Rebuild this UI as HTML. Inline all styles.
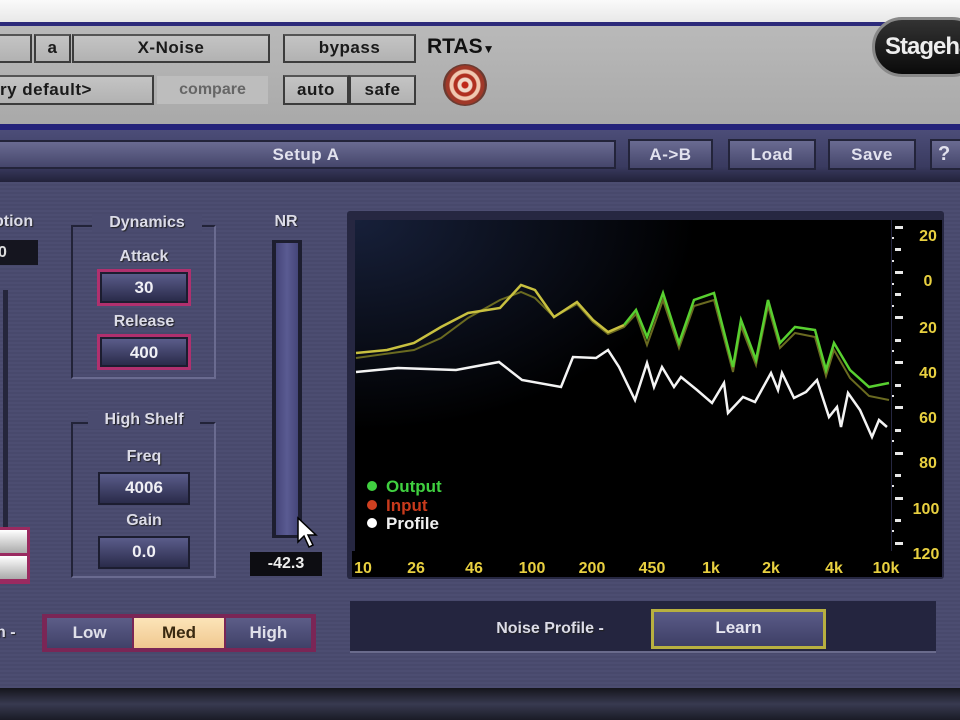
<!DOCTYPE html>
<html><head><meta charset="utf-8"><style>
*{margin:0;padding:0;box-sizing:border-box}
body{width:960px;height:720px;overflow:hidden;background:#4b4c6e;font-family:"Liberation Sans",sans-serif;position:relative}
.a{position:absolute}
.gb{position:absolute;background:linear-gradient(#c4c4c4,#b2b2b2);border:2px solid #3c3c3c;border-top-color:#555;color:#1a1a1a;font-weight:bold;font-size:17px;text-align:center;letter-spacing:0.5px}
.bb{position:absolute;background:linear-gradient(#6a6b92,#45466b);border:2px solid #23243a;color:#e2e2ee;font-weight:bold;font-size:17px;text-align:center;letter-spacing:0.5px}
.lbl{position:absolute;color:#dcdce8;font-weight:bold;font-size:16px;text-align:center;text-shadow:1px 1px 1px #222}
.fld{position:absolute;background:linear-gradient(#5a5c8a,#2a2b4a);border:2px solid #1c1d30;color:#f0f0f5;font-weight:bold;font-size:17px;text-align:center;line-height:28px}
.pink{outline:3px solid #b0306e}
.grp{position:absolute;border:2px solid #222338;border-right-color:#6a6b90;border-bottom-color:#6a6b90}
</style></head><body>
<div class="a" style="left:0;top:0;width:960px;height:22px;background:linear-gradient(#fafafa,#e8e8e8)"></div>
<div class="a" style="left:0;top:22px;width:960px;height:4px;background:#2c2a7a"></div>
<div class="a" style="left:0;top:26px;width:960px;height:99px;background:linear-gradient(#b9b9b9,#a9a9a9)"></div>
<div class="a" style="left:0;top:124px;width:960px;height:6px;background:#25237a"></div>
<div class="a" style="left:0;top:130px;width:960px;height:52px;background:linear-gradient(#4c4d78,#3a3b60 70%,#22223a)"></div>

<div class="gb" style="left:-4px;top:34px;width:36px;height:29px"></div>
<div class="gb" style="left:34px;top:34px;width:37px;height:29px;line-height:24px">a</div>
<div class="gb" style="left:72px;top:34px;width:198px;height:29px;line-height:24px">X-Noise</div>
<div class="gb" style="left:283px;top:34px;width:133px;height:29px;line-height:24px">bypass</div>
<div class="gb" style="left:-4px;top:75px;width:158px;height:30px;line-height:26px;text-align:left;padding-left:2px">ry default&gt;</div>
<div class="a" style="left:157px;top:76px;width:111px;height:28px;background:#bdbdbd;color:#666;font-weight:bold;font-size:16px;text-align:center;line-height:28px">compare</div>
<div class="gb" style="left:283px;top:75px;width:66px;height:30px;line-height:26px">auto</div>
<div class="gb" style="left:349px;top:75px;width:67px;height:30px;line-height:26px">safe</div>
<div class="a" style="left:427px;top:35px;font-weight:bold;font-size:21px;color:#111">RTAS<span style="font-size:12px">▼</span></div>
<div class="a" style="left:443px;top:64px;width:44px;height:42px;border-radius:50%;background:radial-gradient(circle,#c02818 0 3px,#f0d8c8 4px 7px,#b03020 8px 11px,#f0c8b0 12px 15px,#a03828 16px 19px,#6a3a30 20px)"></div>
<div class="a" style="left:872px;top:17px;width:110px;height:60px;border-radius:30px;background:linear-gradient(#333,#0a0a0a);border:3px solid #888;color:#eee;font-weight:bold;font-size:24px;line-height:54px;padding-left:10px;letter-spacing:-1px;overflow:hidden">Stageha</div>

<div class="bb" style="left:-4px;top:140px;width:620px;height:29px;line-height:25px">Setup A</div>
<div class="bb" style="left:628px;top:139px;width:85px;height:31px;line-height:27px">A-&gt;B</div>
<div class="bb" style="left:728px;top:139px;width:88px;height:31px;line-height:27px">Load</div>
<div class="bb" style="left:828px;top:139px;width:88px;height:31px;line-height:27px">Save</div>
<div class="bb" style="left:930px;top:139px;width:40px;height:31px;line-height:27px;text-align:left;padding-left:6px;font-size:20px">?</div>

<div class="a" style="left:0;top:182px;width:960px;height:508px;background:repeating-linear-gradient(#4c4d71 0 2px,#48496c 2px 4px)"></div>

<div class="lbl" style="left:-6px;top:213px">ption</div>
<div class="a" style="left:-2px;top:240px;width:40px;height:25px;background:#15151f;color:#ddd;font-weight:bold;font-size:16px;line-height:25px">0</div>
<div class="a" style="left:3px;top:290px;width:5px;height:242px;background:#25263c"></div>
<div class="a" style="left:-4px;top:527px;width:34px;height:57px;background:#9a2a60;padding:3px"><div style="height:23px;background:linear-gradient(#fff,#aaa)"></div><div style="height:23px;margin-top:3px;background:linear-gradient(#fff,#aaa)"></div></div>

<div class="grp" style="left:71px;top:225px;width:145px;height:154px"></div>
<div class="lbl" style="left:92px;top:214px;width:110px;background:#4a4b6f">Dynamics</div>
<div class="lbl" style="left:98px;top:248px;width:92px">Attack</div>
<div class="fld pink" style="left:100px;top:272px;width:88px;height:31px">30</div>
<div class="lbl" style="left:98px;top:313px;width:92px">Release</div>
<div class="fld pink" style="left:100px;top:337px;width:88px;height:30px">400</div>
<div class="grp" style="left:71px;top:422px;width:145px;height:156px"></div>
<div class="lbl" style="left:88px;top:411px;width:112px;background:#4a4b6f">High Shelf</div>
<div class="lbl" style="left:98px;top:448px;width:92px">Freq</div>
<div class="fld" style="left:98px;top:472px;width:92px;height:33px">4006</div>
<div class="lbl" style="left:98px;top:512px;width:92px">Gain</div>
<div class="fld" style="left:98px;top:536px;width:92px;height:33px">0.0</div>

<div class="lbl" style="left:266px;top:213px;width:40px">NR</div>
<div class="a" style="left:272px;top:240px;width:30px;height:298px;background:#1d1e30;padding:3px 4px"><div style="height:100%;background:linear-gradient(90deg,#45467a,#5a5b92,#45467a)"></div></div>
<div class="a" style="left:250px;top:552px;width:72px;height:24px;background:#0d0d12;color:#eee;font-weight:bold;font-size:16px;text-align:center;line-height:24px">-42.3</div>
<svg class="a" style="left:296px;top:516px" width="28" height="34" viewBox="0 0 28 34"><path d="M2 2 L2 26 L8 20 L13 31 L17 29 L12 19 L20 19 Z" fill="#fff" stroke="#000" stroke-width="1.5"/></svg>

<div class="a" style="left:347px;top:211px;width:597px;height:368px;background:#262741;border-radius:3px"></div>
<div class="a" style="left:355px;top:220px;width:536px;height:331px;background:radial-gradient(ellipse at 0 0,#17203a,#000 45%)"></div>
<div class="a" style="left:352px;top:551px;width:540px;height:26px;background:#000"></div>
<div class="a" style="left:892px;top:220px;width:50px;height:357px;background:#000"></div>
<svg class="a" style="left:0;top:0" width="960" height="720">
<g fill="#e8e8e8"><rect x="895" y="226" width="8" height="3"/><rect x="895" y="248" width="6" height="3"/><rect x="895" y="271" width="8" height="3"/><rect x="895" y="293" width="6" height="3"/><rect x="895" y="316" width="8" height="3"/><rect x="895" y="339" width="6" height="3"/><rect x="895" y="361" width="8" height="3"/><rect x="895" y="384" width="6" height="3"/><rect x="895" y="406" width="8" height="3"/><rect x="895" y="429" width="6" height="3"/><rect x="895" y="452" width="8" height="3"/><rect x="895" y="474" width="6" height="3"/><rect x="895" y="497" width="8" height="3"/><rect x="895" y="519" width="6" height="3"/><rect x="895" y="542" width="8" height="3"/>
<rect x="892" y="237" width="2" height="2"/><rect x="892" y="260" width="2" height="2"/><rect x="892" y="283" width="2" height="2"/><rect x="892" y="305" width="2" height="2"/><rect x="892" y="350" width="2" height="2"/><rect x="892" y="395" width="2" height="2"/><rect x="892" y="440" width="2" height="2"/><rect x="892" y="485" width="2" height="2"/><rect x="892" y="530" width="2" height="2"/></g>
<polyline fill="none" stroke="#6a6a20" stroke-width="2" points="356,358 414,350 441,338 468,318 500,300 521,292 535,298 554,317 577,304 593,322 608,334 624,327 636,314 647,345 663,300 679,348 694,306 714,300 733,372 741,326 756,365 768,306 780,348 795,333 815,337 826,376 834,350 850,378 869,396 889,400"/>
<polyline fill="none" stroke="#c8c040" stroke-width="2.5" points="356,353 387,350 414,343 441,327 468,313 500,308 521,285 535,290 554,317 577,302 593,320 608,332 624,325"/>
<polyline fill="none" stroke="#58d030" stroke-width="2.5" points="624,325 636,310 647,337 663,293 679,343 694,300 714,293 733,367 741,320 756,360 768,300 780,343 795,327 815,330 826,370 834,343 850,370 869,387 889,383"/>
<polyline fill="none" stroke="#f4f4f4" stroke-width="2.5" points="356,372 398,368 456,370 499,362 522,380 561,387 573,357 596,358 608,350 619,367 635,400 647,363 654,387 662,367 674,387 681,377 697,390 712,403 724,383 728,413 743,397 755,402 771,373 778,390 782,373 794,398 806,392 817,380 829,417 837,407 841,427 848,393 860,410 872,437 879,420 887,427"/>
<circle cx="372" cy="486" r="5" fill="#40d040"/><circle cx="372" cy="505" r="5" fill="#d04020"/><circle cx="372" cy="523" r="5" fill="#fff"/>
<g font-family="Liberation Sans" font-weight="bold" font-size="17"><text x="386" y="492" fill="#40d040">Output</text><text x="386" y="511" fill="#c83a1c">Input</text><text x="386" y="529" fill="#f0f0f0">Profile</text></g>
<g font-family="Liberation Sans" font-weight="bold" font-size="16" fill="#e8d040" text-anchor="middle"><text x="363" y="573">10</text><text x="416" y="573">26</text><text x="474" y="573">46</text><text x="532" y="573">100</text><text x="592" y="573">200</text><text x="652" y="573">450</text><text x="711" y="573">1k</text><text x="771" y="573">2k</text><text x="834" y="573">4k</text><text x="886" y="573">10k</text>
<text x="928" y="241">20</text><text x="928" y="286">0</text><text x="928" y="333">20</text><text x="928" y="378">40</text><text x="928" y="423">60</text><text x="928" y="468">80</text><text x="926" y="514">100</text><text x="926" y="559">120</text></g>
</svg>

<div class="lbl" style="left:-4px;top:624px">n -</div>
<div class="a" style="left:42px;top:614px;width:274px;height:38px;background:#7a2656;padding:4px 5px;display:flex;gap:2px">
<div style="flex:1;background:linear-gradient(#5c5d88,#404168);color:#e0e0ea;font-weight:bold;font-size:17px;text-align:center;line-height:30px">Low</div>
<div style="flex:1.05;background:linear-gradient(#fce4b8,#f0c890);color:#3a2a10;font-weight:bold;font-size:17px;text-align:center;line-height:30px">Med</div>
<div style="flex:1;background:linear-gradient(#5c5d88,#404168);color:#e0e0ea;font-weight:bold;font-size:17px;text-align:center;line-height:30px">High</div></div>
<div class="a" style="left:350px;top:601px;width:586px;height:52px;background:#24253f;border-bottom:2px solid #6a6b8c"></div>
<div class="lbl" style="left:470px;top:620px;width:160px">Noise Profile -</div>
<div class="a" style="left:651px;top:609px;width:175px;height:40px;border:3px solid #b8b040;background:linear-gradient(#5a5b88,#3e3f66);color:#e6e6f0;font-weight:bold;font-size:17px;text-align:center;line-height:32px">Learn</div>
<div class="a" style="left:0;top:688px;width:960px;height:32px;background:linear-gradient(#15151c,#383a50 50%,#1a1b26)"></div>
</body></html>
